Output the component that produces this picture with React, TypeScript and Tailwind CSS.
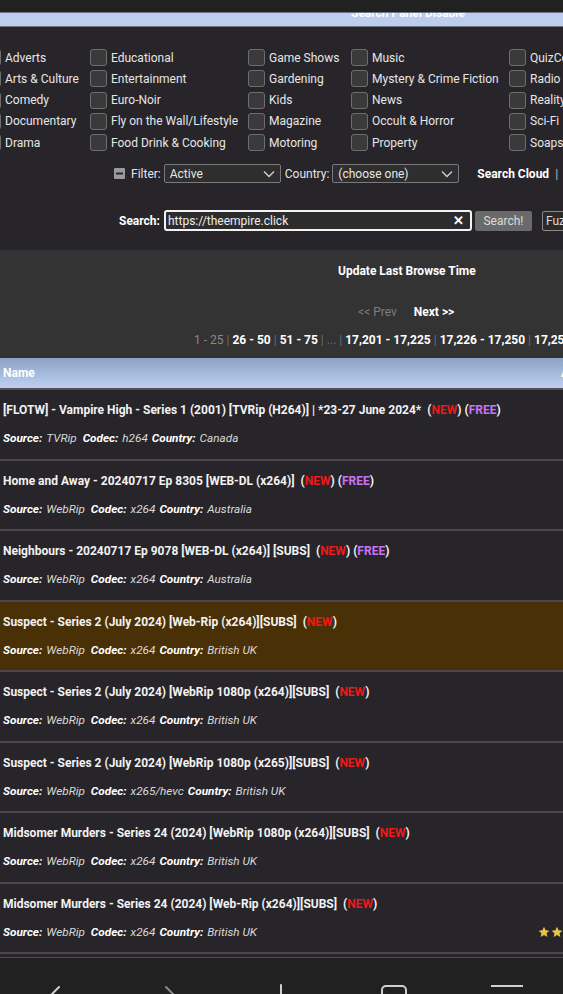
import React from 'react';

const categories: string[][] = [
  ['Adverts', 'Educational', 'Game Shows', 'Music', 'QuizComedy'],
  ['Arts & Culture', 'Entertainment', 'Gardening', 'Mystery & Crime Fiction', 'Radio'],
  ['Comedy', 'Euro-Noir', 'Kids', 'News', 'Reality'],
  ['Documentary', 'Fly on the Wall/Lifestyle', 'Magazine', 'Occult & Horror', 'Sci-Fi'],
  ['Drama', 'Food Drink & Cooking', 'Motoring', 'Property', 'Soaps'],
];

type Row = {
  title: string;
  free?: boolean;
  source: string;
  codec: string;
  country: string;
  highlight?: boolean;
  stars?: boolean;
};

const rows: Row[] = [
  { title: '[FLOTW] - Vampire High - Series 1 (2001) [TVRip (H264)] | *23-27 June 2024*', free: true, source: 'TVRip', codec: 'h264', country: 'Canada' },
  { title: 'Home and Away - 20240717 Ep 8305 [WEB-DL (x264)]', free: true, source: 'WebRip', codec: 'x264', country: 'Australia' },
  { title: 'Neighbours - 20240717 Ep 9078 [WEB-DL (x264)] [SUBS]', free: true, source: 'WebRip', codec: 'x264', country: 'Australia' },
  { title: 'Suspect - Series 2 (July 2024) [Web-Rip (x264)][SUBS]', source: 'WebRip', codec: 'x264', country: 'British UK', highlight: true },
  { title: 'Suspect - Series 2 (July 2024) [WebRip 1080p (x264)][SUBS]', source: 'WebRip', codec: 'x264', country: 'British UK' },
  { title: 'Suspect - Series 2 (July 2024) [WebRip 1080p (x265)][SUBS]', source: 'WebRip', codec: 'x265/hevc', country: 'British UK' },
  { title: 'Midsomer Murders - Series 24 (2024) [WebRip 1080p (x264)][SUBS]', source: 'WebRip', codec: 'x264', country: 'British UK' },
  { title: 'Midsomer Murders - Series 24 (2024) [Web-Rip (x264)][SUBS]', source: 'WebRip', codec: 'x264', country: 'British UK', stars: true },
];

const Checkbox = () => (
  <span className="inline-block h-[17px] w-[17px] shrink-0 rounded-[3px] border border-[#6e6e6e] bg-[#3a3a3a]" />
);

const Chevron = () => (
  <svg width="12" height="8" viewBox="0 0 12 8" fill="none" stroke="#d0d0d0" strokeWidth="1.4">
    <path d="M1 1.5 6 6.5 11 1.5" />
  </svg>
);

const Star = () => (
  <svg width="12" height="12" viewBox="0 0 24 24" fill="#e9c24a">
    <path d="M12 1.5l3.2 7 7.6.8-5.7 5.1 1.6 7.5L12 18l-6.7 3.9 1.6-7.5L1.2 9.3l7.6-.8z" />
  </svg>
);

function Pagination() {
  const sep = <span className="px-[3px] font-normal text-[#6d6d6d]">|</span>;
  return (
    <div className="mt-[12px] whitespace-nowrap pl-[194px] leading-[16px]">
      <span className="text-[#8a8a8a]">1 - 25</span>
      {sep}
      <span className="font-bold text-white">26 - 50</span>
      {sep}
      <span className="font-bold text-white">51 - 75</span>
      {sep}
      <span className="text-[#6d6d6d]">...</span>
      {sep}
      <span className="font-bold text-white">17,201 - 17,225</span>
      {sep}
      <span className="font-bold text-white">17,226 - 17,250</span>
      {sep}
      <span className="font-bold text-white">17,251 - 17,275</span>
    </div>
  );
}

function TorrentRow({ row }: { row: Row }) {
  return (
    <div
      className={`border-b-2 border-[#4a484e] pl-[3px] pt-[12px] pb-[12.5px] ${
        row.highlight ? 'bg-[#4a3006]' : 'bg-[#27252a]'
      }`}
    >
      <div className="whitespace-nowrap text-[12px] font-bold leading-[16px] text-[#f2f2f2]">
        {row.title}
        {'\u00a0 ('}
        <span className="text-[#f01818]">NEW</span>
        {')'}
        {row.free && (
          <>
            {' ('}
            <span className="text-[#c772f7]">FREE</span>
            {')'}
          </>
        )}
      </div>
      <div className="mt-[12px] flex items-center whitespace-nowrap text-[11.75px] italic leading-[16px]">
        <span className="font-bold text-white">Source:</span>
        <span className="ml-[4px] text-[#dadada]">{row.source}</span>
        <span className="ml-[6px] font-bold text-white">Codec:</span>
        <span className="ml-[4px] text-[#dadada]">{row.codec}</span>
        <span className="ml-[4px] font-bold text-white">Country:</span>
        <span className="ml-[4px] text-[#dadada]">{row.country}</span>
        {row.stars && (
          <span className="ml-auto flex gap-[1px]">
            <Star />
            <Star />
          </span>
        )}
      </div>
    </div>
  );
}

export default function App() {
  return (
    <div className="flex h-[994px] w-[563px] flex-col overflow-hidden bg-[#27252a] font-['Roboto','Liberation_Sans',sans-serif] text-[12px] text-[#e6e6e6]">
      {/* browser chrome top */}
      <div className="relative z-10 h-[12px] shrink-0 bg-[#212121]" />

      {/* collapsed search panel bar */}
      <div className="h-[15px] shrink-0 overflow-hidden border-y border-[#6f7382] bg-[#bccdee]">
        <div className="-mt-[8px] whitespace-nowrap pl-[351px] text-[12px] font-bold leading-[16px] text-white">Search Panel Disable</div>
      </div>

      {/* categories */}
      <div className="shrink-0 pt-[20px]">
        {categories.map((line, i) => (
          <div key={i} className="-ml-[16px] grid h-[21.25px] grid-cols-[106px_158px_103px_158px_160px] items-center whitespace-nowrap">
            {line.map((c) => (
              <label key={c} className="flex items-center gap-[4px]">
                <Checkbox />
                <span>{c}</span>
              </label>
            ))}
          </div>
        ))}
      </div>

      {/* filter row */}
      <div className="mt-[11px] flex shrink-0 items-center whitespace-nowrap pl-[114px]">
        <svg width="11" height="11" viewBox="0 0 11 11" className="shrink-0">
          <rect x="0" y="0" width="11" height="11" rx="1" fill="#9a9a9a" />
          <rect x="2" y="4.5" width="7" height="2" fill="#27252a" />
        </svg>
        <span className="ml-[6px]">Filter:</span>
        <div className="ml-[3px] flex h-[19px] w-[117px] shrink-0 items-center justify-between rounded-[2px] border border-[#7a7a7a] bg-[#2e2e2e] px-[5px]">
          <span>Active</span>
          <Chevron />
        </div>
        <span className="ml-[4px]">Country:</span>
        <div className="ml-[3px] flex h-[19px] w-[127px] shrink-0 items-center justify-between rounded-[2px] border border-[#7a7a7a] bg-[#2e2e2e] px-[5px]">
          <span>(choose one)</span>
          <Chevron />
        </div>
        <span className="ml-[18px] font-bold text-white">Search Cloud</span>
        <span className="ml-[6px] text-[#bbbbbb]">|</span>
        <span className="ml-[5px] text-[#bbbbbb]">S</span>
      </div>

      {/* search row */}
      <div className="mt-[27px] flex shrink-0 items-center whitespace-nowrap pl-[119px]">
        <span className="font-bold text-white">Search:</span>
        <div className="ml-[4px] flex h-[21px] w-[308px] shrink-0 items-center justify-between rounded-[3px] border-2 border-[#f2f2f2] bg-[#2c2c2c] pl-[2px] pr-[6px]">
          <span className="text-[#eeeeee]">https://theempire.click</span>
          <span className="text-[13px] font-bold leading-none text-white">✕</span>
        </div>
        <button className="ml-[3px] h-[20px] w-[57px] shrink-0 rounded-[2px] bg-[#6a6a6a] text-[12px] text-[#dddddd]">Search!</button>
        <button className="ml-[10px] h-[20px] w-[40px] shrink-0 rounded-[2px] border border-[#8a8a8a] bg-[#2a2a2a] pl-[3px] text-left text-[12px] text-[#dddddd]">Fuzzy</button>
      </div>

      {/* browse panel */}
      <div className="mt-[19px] shrink-0 bg-[#333333] pb-[10px] pt-[13px]">
        <div className="whitespace-nowrap pl-[338px] font-bold leading-[16px] text-white">Update Last Browse Time</div>
        <div className="mt-[25px] flex pl-[358px] leading-[16px]">
          <span className="text-[#7e7e7e]">&lt;&lt; Prev</span>
          <span className="ml-[17px] font-bold text-white">Next &gt;&gt;</span>
        </div>
        <Pagination />
      </div>

      {/* table header */}
      <div className="flex h-[32px] shrink-0 items-center whitespace-nowrap border-b-2 border-[#505055] bg-gradient-to-b from-[#8ba3c6] to-[#bfd1f1] pl-[3px]">
        <span className="w-[558px] shrink-0 font-bold text-white">Name</span>
        <span className="shrink-0 font-bold text-white">Added</span>
      </div>

      {/* rows */}
      <div className="shrink-0">
        {rows.map((r, i) => (
          <TorrentRow key={i} row={r} />
        ))}
      </div>
      <div className="mt-[3px] h-px shrink-0 bg-[#4a484e]" />

      {/* browser chrome bottom */}
      <div className="grid flex-1 grid-cols-5 bg-[#212121] pt-[26px]">
        <div className="flex justify-center">
          <svg width="24" height="24" viewBox="0 0 24 24" fill="none" stroke="#d0d0d0" strokeWidth="2" strokeLinecap="round">
            <path d="M15 3 6 12l9 9" />
          </svg>
        </div>
        <div className="flex justify-center">
          <svg width="24" height="24" viewBox="0 0 24 24" fill="none" stroke="#8a8a8a" strokeWidth="2" strokeLinecap="round">
            <path d="M9 3l9 9-9 9" />
          </svg>
        </div>
        <div className="flex justify-center">
          <svg width="28" height="28" viewBox="0 0 28 28" fill="none" stroke="#d0d0d0" strokeWidth="2" strokeLinecap="round">
            <path d="M14 1v26M1 16h26" />
          </svg>
        </div>
        <div className="flex justify-center">
          <svg width="28" height="28" viewBox="0 0 28 28" fill="none" stroke="#d0d0d0" strokeWidth="2">
            <rect x="2" y="2" width="24" height="24" rx="4" />
          </svg>
        </div>
        <div className="flex justify-center">
          <svg width="32" height="24" viewBox="0 0 32 24" fill="none" stroke="#d0d0d0" strokeWidth="2">
            <path d="M0 2h32M0 12h32M0 22h32" />
          </svg>
        </div>
      </div>
    </div>
  );
}
